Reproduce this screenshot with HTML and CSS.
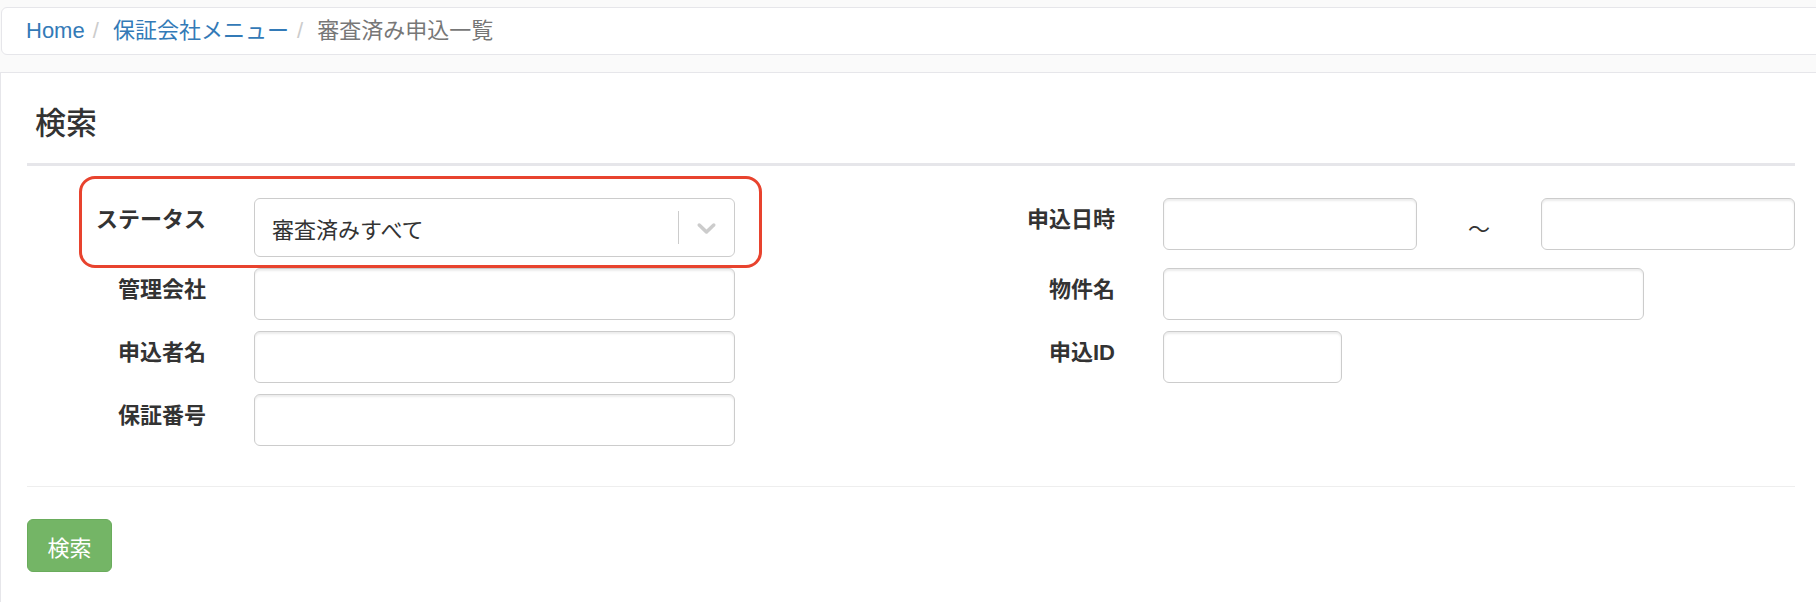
FILE: index.html
```html
<!DOCTYPE html>
<html lang="ja">
<head>
  <meta charset="UTF-8" />
  <title>審査済み申込一覧</title>
  <link rel="stylesheet" href="styles.css">
</head>
<body>
  <ol class="breadcrumb">
    <li><a href="#">Home</a></li>
    <li><a href="#">保証会社メニュー</a></li>
    <li class="active">審査済み申込一覧</li>
  </ol>

  <div class="panel">
    <h3 class="panel-title">検索</h3>
    <hr class="title-rule" />

    <form class="search-form">
      <div class="form-row highlight">
        <label class="control-label">ステータス</label>
        <div class="select-control">
          <span class="select-value">審査済みすべて</span>
          <span class="select-sep"></span>
          <span class="select-arrow">
            <svg viewBox="0 0 20 20" width="31" height="31"><path fill="#cccccc" d="M4.516 7.548c0.436-0.446 1.043-0.481 1.576 0l3.908 3.747 3.908-3.747c0.533-0.481 1.141-0.446 1.574 0 0.436 0.445 0.408 1.197 0 1.615-0.406 0.418-4.695 4.502-4.695 4.502-0.217 0.223-0.502 0.335-0.787 0.335s-0.57-0.112-0.789-0.335c0 0-4.287-4.084-4.695-4.502s-0.436-1.17 0-1.615z"/></svg>
          </span>
        </div>
        <span class="annotation"></span>
      </div>
      <div class="form-row right">
        <label class="control-label">申込日時</label>
        <input type="text" class="form-control date" />
        <span class="tilde">～</span>
        <input type="text" class="form-control date" />
      </div>

      <div class="form-row">
        <label class="control-label">管理会社</label>
        <input type="text" class="form-control" />
      </div>
      <div class="form-row right">
        <label class="control-label">物件名</label>
        <input type="text" class="form-control" />
      </div>

      <div class="form-row">
        <label class="control-label">申込者名</label>
        <input type="text" class="form-control" />
      </div>
      <div class="form-row right">
        <label class="control-label">申込ID</label>
        <input type="text" class="form-control short" />
      </div>

      <div class="form-row">
        <label class="control-label">保証番号</label>
        <input type="text" class="form-control" />
      </div>
    </form>

    <hr class="form-rule" />
    <button type="button" class="btn-search">検索</button>
  </div>
</body>
</html>
```

FILE: styles.css
```css
body { margin: 0; background: #fafafa; font-family: "Liberation Sans", "Noto Sans CJK JP", sans-serif; font-size: 22px; color: #333; overflow: hidden; }

.breadcrumb { list-style: none; margin: 7px -20px 0 1px; padding: 0 24px; line-height: 46px; background: #fff; border: 1px solid #e6e6ea; border-radius: 6px; display: flex; }
.breadcrumb li + li::before { content: "/\00a0"; color: #ccc; padding: 0 8px; }
.breadcrumb a { color: #337ab7; text-decoration: none; }
.breadcrumb .active { color: #777; }

.panel { margin: 17px -20px 0 0; background: #fff; border: 1px solid #e6e6ea; padding: 34px 40px 40px 26px; }
.panel-title { margin: 0; padding-left: 8px; font-size: 31px; line-height: 34px; font-weight: 500; color: #333; }
.title-rule { margin: 22px 0 32px; border: 0; border-top: 3px solid #e6e6ea; height: 0; }

.search-form { display: grid; grid-template-columns: 884px 1fr; row-gap: 11px; align-items: start; }
.form-row { display: flex; align-items: flex-start; gap: 48px; position: relative; }
.control-label { width: 179px; flex: none; text-align: right; font-weight: bold; line-height: 31px; padding-top: 6px; }
.form-row.right .control-label { width: 204px; }

.form-control { box-sizing: border-box; width: 481px; height: 52px; border: 1px solid #ccc; border-radius: 6px; box-shadow: inset 0 2px 2px rgba(0,0,0,.075); padding: 0 18px; font: inherit; margin: 0; }
.form-control.date { width: 254px; }
.form-control.short { width: 179px; }
.form-row.right { gap: 0; }
.form-row.right .control-label { margin-right: 48px; }
.tilde { width: 124px; text-align: center; line-height: 52px; padding-top: 6px; }

.select-control { box-sizing: border-box; width: 481px; height: 59px; border: 1px solid #ccc; border-radius: 6px; display: flex; align-items: center; padding-left: 17px; background: #fff; }
.select-value { flex: 1; }
.select-sep { width: 1px; align-self: stretch; margin: 12px 0; background: #ccc; }
.select-arrow { padding: 0 12px; display: flex; }

.annotation { position: absolute; left: 52px; top: -22px; width: 683px; height: 92px; box-sizing: border-box; border: 3px solid #e8432e; border-radius: 16px; pointer-events: none; }

.form-rule { margin: 40px 0 32px; border: 0; border-top: 1px solid #eee; height: 0; }

.btn-search { height: 53px; width: 85px; padding: 0; background: #74b566; border: 1px solid #6aac5c; border-radius: 6px; color: #fff; font: inherit; cursor: pointer; }
```
